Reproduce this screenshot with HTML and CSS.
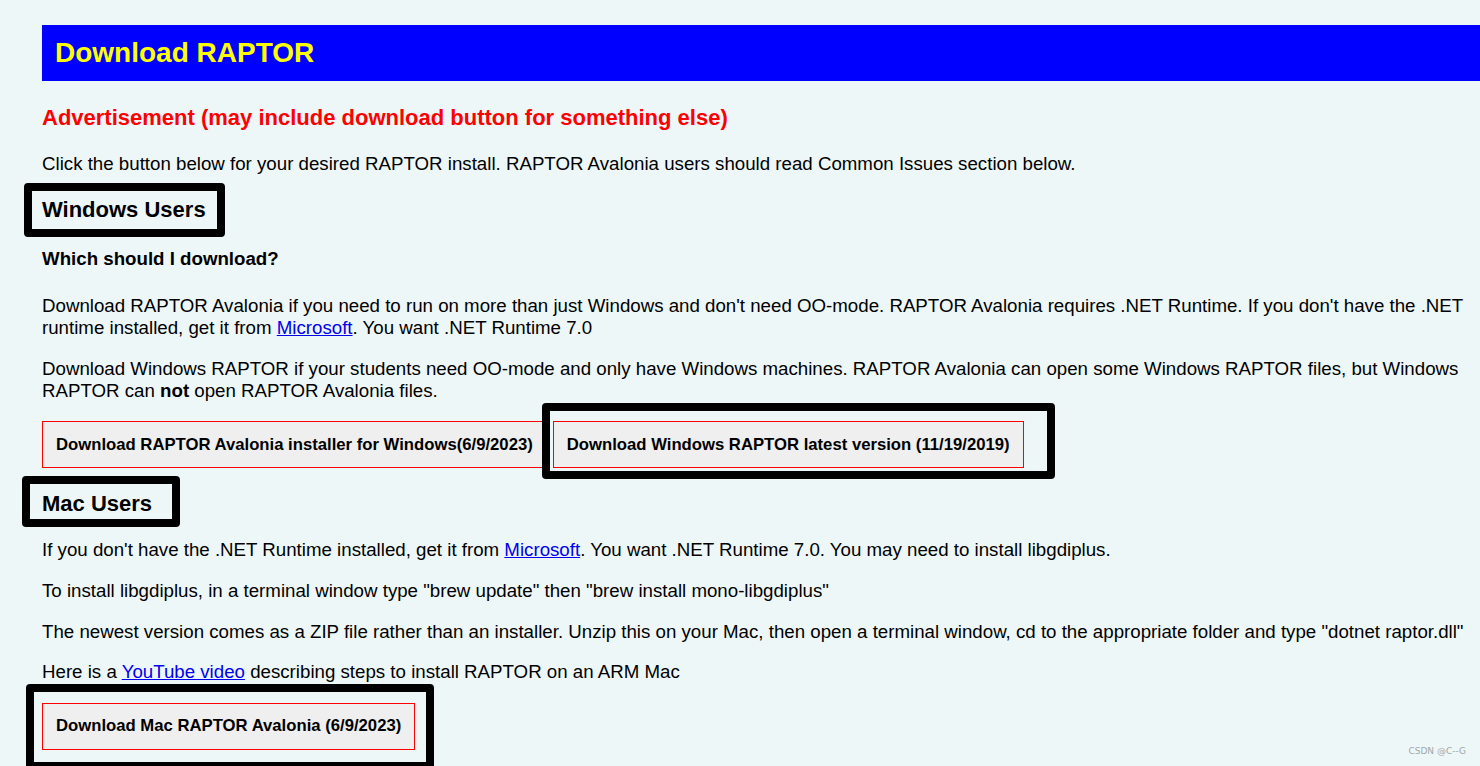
FILE: index.html
```html
<!DOCTYPE html>
<html lang="en">
<head>
    <meta charset="UTF-8">
    <title>Download RAPTOR</title>
    <link rel="stylesheet" href="styles.css">
</head>
<body>
    <h2 class="banner">Download RAPTOR</h2>

    <h3 class="ad">Advertisement (may include download button for something else)</h3>

    <p>Click the button below for your desired RAPTOR install. RAPTOR Avalonia users should read Common Issues section below.</p>

    <h3>Windows Users</h3>
    <h4>Which should I download?</h4>
    <p>Download RAPTOR Avalonia if you need to run on more than just Windows and don't need OO-mode. RAPTOR Avalonia requires .NET Runtime. If you don't have the .NET runtime installed, get it from <a href="#">Microsoft</a>. You want .NET Runtime 7.0</p>
    <p>Download Windows RAPTOR if your students need OO-mode and only have Windows machines. RAPTOR Avalonia can open some Windows RAPTOR files, but Windows RAPTOR can <b>not</b> open RAPTOR Avalonia files.</p>
    <div class="buttons">
        <button class="dl">Download RAPTOR Avalonia installer for Windows(6/9/2023)</button>
        <button class="dl">Download Windows RAPTOR latest version (11/19/2019)</button>
    </div>

    <h3 class="mac">Mac Users</h3>
    <p>If you don't have the .NET Runtime installed, get it from <a href="#">Microsoft</a>. You want .NET Runtime 7.0. You may need to install libgdiplus.</p>
    <p>To install libgdiplus, in a terminal window type "brew update" then "brew install mono-libgdiplus"</p>
    <p>The newest version comes as a ZIP file rather than an installer. Unzip this on your Mac, then open a terminal window, cd to the appropriate folder and type "dotnet raptor.dll"</p>
    <p>Here is a <a href="#">YouTube video</a> describing steps to install RAPTOR on an ARM Mac</p>
    <div class="buttons">
        <button class="dl">Download Mac RAPTOR Avalonia (6/9/2023)</button>
    </div>

    <!-- annotation frames drawn over the page -->
    <div class="mark mark-win"></div>
    <div class="mark mark-winbtn"></div>
    <div class="mark mark-mac"></div>
    <div class="mark mark-macbtn"></div>

    <div class="watermark">CSDN @C--G</div>
</body>
</html>
```

FILE: styles.css
```css
html {
    overflow: hidden;
}
body {
    margin: 0;
    padding: 25px 0 0 42px;
    background-color: #eef7f8;
    color: #000;
    font-family: "Liberation Sans", Arial, sans-serif;
    font-size: 18.7px;
}
p {
    margin: 18.7px 0;
}
a {
    color: #0000ee;
}
h3 {
    font-size: 22px;
    margin: 22px 0;
}
h4 {
    font-size: 18.7px;
    margin: 25px 0;
}
.banner {
    margin: 0;
    padding: 12px 13px;
    background-color: #0000ff;
    color: #ffff00;
    font-size: 28px;
}
.ad {
    margin-top: 24px;
    color: #ff0000;
}
.mac {
    margin-top: 23px;
}
.buttons {
    display: flex;
    gap: 6px;
    margin: 19.5px 0 18.7px;
}
.dl {
    padding: 12.5px 13px;
    background-color: #efefef;
    color: #000;
    border: 1px solid #ff0000;
    border-radius: 0;
    font-family: "Liberation Sans", Arial, sans-serif;
    font-size: 16.7px;
    font-weight: bold;
}
/* black marker frames */
.mark {
    position: absolute;
    box-sizing: border-box;
    border: 8px solid #000;
    border-radius: 4px;
}
.mark-win {
    left: 24px;
    top: 183px;
    width: 201px;
    height: 54px;
}
.mark-winbtn {
    left: 542px;
    top: 403px;
    width: 513px;
    height: 76px;
}
.mark-mac {
    left: 22px;
    top: 476px;
    width: 158px;
    height: 51px;
}
.mark-macbtn {
    left: 26px;
    top: 684px;
    width: 408px;
    height: 86px;
}
.watermark {
    position: absolute;
    right: 14px;
    top: 746px;
    font-family: "DejaVu Sans", sans-serif;
    font-size: 9px;
    color: #a0a8a8;
}
```
